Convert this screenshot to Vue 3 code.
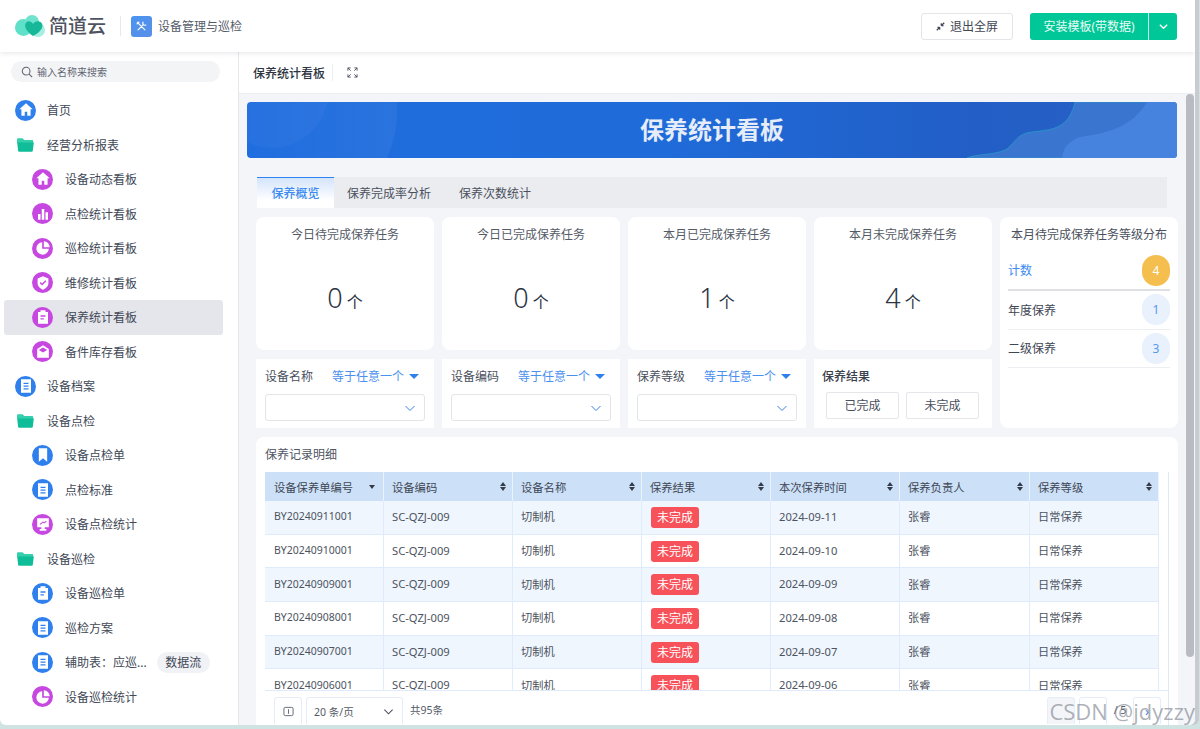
<script setup>
const paths = {
  home: 'M12 4 4 11h2.5v8h4v-5h3v5h4v-8H20z',
  bars: 'M6 12h3v7H6zM10.5 6h3v13h-3zM15 10h3v9h-3z',
  pie: 'M11 5a7.5 7.5 0 1 0 8 8h-8zM13 4v7h7a7 7 0 0 0-7-7z',
  shield: 'M12 4 5.5 6.5V12c0 4 3 6.5 6.5 8 3.5-1.5 6.5-4 6.5-8V6.5zM11 15l-3-3 1.2-1.2L11 12.6l3.8-3.8L16 10z',
  clip: 'M9 4h6v2h3v14H6V6h3zM9 10v1.6h6V10zM9 13.5v1.6h4v-1.6z',
  mail: 'M12 4 5 8.5V19h14V8.5zM7 9.5 12 6.5l5 3-5 3.2z',
  doc: 'M6 4h12v16H6zM9 8v1.5h6V8zM9 11.3v1.5h6v-1.5zM9 14.6v1.5h6v-1.5z',
  mark: 'M7 4h10v16l-5-4-5 4z',
  screen: 'M5 5h14v11h-5v2h2v2H8v-2h2v-2H5zM8 12l1 1 3-2.5 1.5 1L16.5 9l-1-1-2 2-1.5-1-4 3z',
}
const nav = [
  { t: '首页', k: 'home', c: 'b', lv: 1 },
  { t: '经营分析报表', k: 'folder', lv: 1 },
  { t: '设备动态看板', k: 'home', c: 'p', lv: 2 },
  { t: '点检统计看板', k: 'bars', c: 'p', lv: 2 },
  { t: '巡检统计看板', k: 'pie', c: 'p', lv: 2 },
  { t: '维修统计看板', k: 'shield', c: 'p', lv: 2 },
  { t: '保养统计看板', k: 'clip', c: 'p', lv: 2, on: true },
  { t: '备件库存看板', k: 'mail', c: 'p', lv: 2 },
  { t: '设备档案', k: 'doc', c: 'b', lv: 1 },
  { t: '设备点检', k: 'folder', lv: 1 },
  { t: '设备点检单', k: 'mark', c: 'b', lv: 2 },
  { t: '点检标准', k: 'doc', c: 'b', lv: 2 },
  { t: '设备点检统计', k: 'screen', c: 'p', lv: 2 },
  { t: '设备巡检', k: 'folder', lv: 1 },
  { t: '设备巡检单', k: 'clip', c: 'b', lv: 2 },
  { t: '巡检方案', k: 'doc', c: 'b', lv: 2 },
  { t: '辅助表：应巡...', k: 'doc', c: 'b', lv: 2, tag: '数据流' },
  { t: '设备巡检统计', k: 'pie', c: 'p', lv: 2 },
]
const stats = [
  { t: '今日待完成保养任务', v: 0 },
  { t: '今日已完成保养任务', v: 0 },
  { t: '本月已完成保养任务', v: 1 },
  { t: '本月未完成保养任务', v: 4 },
]
const filters = ['设备名称', '设备编码', '保养等级']
const cols = ['设备保养单编号', '设备编码', '设备名称', '保养结果', '本次保养时间', '保养负责人', '保养等级']
const rows = [
  ['BY20240911001', '2024-09-11'],
  ['BY20240910001', '2024-09-10'],
  ['BY20240909001', '2024-09-09'],
  ['BY20240908001', '2024-09-08'],
  ['BY20240907001', '2024-09-07'],
  ['BY20240906001', '2024-09-06'],
]
</script>

<template>
  <div class="win">
    <header class="top">
      <svg class="logo" viewBox="0 0 30 22" width="30" height="22">
        <circle cx="8.500" cy="12.500" r="8.500" fill="#5fe0c8" />
        <circle cx="17" cy="7" r="7" fill="#6fe3cd" />
        <ellipse cx="23" cy="15" rx="7" ry="7" fill="#a5efe0" />
        <path d="M18 21C12 17 9 12 10.500 8.500 12 5.500 16 5.500 18 9c2-3.500 7-3.500 9-.5 2 4.500-3 9.500-9 12.500z" fill="#17b79a" />
      </svg>
      <span class="brand">简道云</span>
      <i class="vline"></i>
      <span class="appicon">
        <svg viewBox="0 0 24 24" width="15" height="15" fill="none" stroke="#fff" stroke-width="1.800" stroke-linecap="round">
          <path d="M7 7l10.500 10.500M5.500 5.500 8 5M5.500 5.500 5 8M15 9 6.500 17.500M14 6.500a3.500 3.500 0 0 0 3.500 3.500 3.500 3.500 0 0 0 1.500-.4M14 6.500a3.500 3.500 0 0 1 .5-1.500" />
        </svg>
      </span>
      <span class="appname">设备管理与巡检</span>
      <span class="grow"></span>
      <button class="exit">
        <svg viewBox="0 0 12 12" width="9" height="9" fill="none" stroke="#3a4252" stroke-width="1.500"><path d="M1 11 5 7M5 7H1.800M5 7v3.200M11 1 7 5M7 5h3.200M7 5V1.800" /></svg>
        退出全屏
      </button>
      <div class="install">
        <span class="inst-main">安装模板(带数据)</span>
        <span class="inst-drop">
          <svg viewBox="0 0 12 12" width="11" height="11" fill="none" stroke="#fff" stroke-width="1.500"><path d="M2 4l4 4 4-4" /></svg>
        </span>
      </div>
    </header>

    <div class="body">
      <aside class="side">
        <div class="search">
          <svg viewBox="0 0 14 14" width="12" height="12" fill="none" stroke="#5d6470" stroke-width="1.200"><circle cx="6" cy="6" r="4.500" /><path d="M9.500 9.500 13 13" /></svg>
          <span>输入名称来搜索</span>
        </div>
        <nav class="nav">
          <div v-for="n in nav" :key="n.t" class="item" :class="['lv' + n.lv, { on: n.on }]">
            <svg v-if="n.k === 'folder'" class="folder" viewBox="0 0 17 14" width="17" height="14">
              <path d="M0 1.500C0 .7.500.2 1.200.2h4.300L7.300 2H15c.8 0 1.200.5 1.200 1.200V5H0z" fill="#36cfae" />
              <path d="M.2 4.500h16.600l-1 8.300c-.1.600-.5 1-1.100 1H2.200c-.6 0-1-.4-1.100-1z" fill="#0fbd98" />
            </svg>
            <span v-else class="dot" :class="n.c">
              <svg viewBox="0 0 24 24" width="20" height="20" fill="#fff" fill-rule="evenodd"><path :d="paths[n.k]" /></svg>
            </span>
            <span class="label">{{ n.t }}</span>
            <span v-if="n.tag" class="tag">{{ n.tag }}</span>
          </div>
        </nav>
      </aside>

      <main class="main">
        <div class="tabbar">
          <span class="tabname">保养统计看板</span>
          <i class="vline2"></i>
          <svg viewBox="0 0 12 12" width="11" height="11" fill="none" stroke="#4a5160" stroke-width="1"><path d="M1 4V1h3M8 1h3v3M11 8v3H8M4 11H1V8M1 1l3 3M11 1 8 4M11 11 8 8M1 11l3-3" /></svg>
        </div>
        <div class="content">
          <section class="banner">
            <i class="c1"></i><i class="c2"></i>
            <svg class="waves" viewBox="0 0 210 56" width="210" height="56" preserveAspectRatio="none">
              <path d="M0 56C8 52 28 53 38 48 46 44 48 34 60 31 70 28 92 31 102 15 105 10 107 5 108 0H210V56Z" fill="#3a75cf" stroke="#2a9bc9" stroke-width=".8" />
              <path d="M95 56C96 44 105 36 118 34 140 31 165 25 180 0H210V56Z" fill="#4583de" />
            </svg>
            <h1>保养统计看板</h1>
          </section>

          <div class="tabs">
            <span class="tab active">保养概览</span>
            <span class="tab">保养完成率分析</span>
            <span class="tab">保养次数统计</span>
          </div>

          <div class="grid">
            <div v-for="s in stats" :key="s.t" class="stat">
              <div class="stat-t">{{ s.t }}</div>
              <div class="stat-v">{{ s.v }}<small>个</small></div>
            </div>
            <div class="dist">
              <div class="dist-t">本月待完成保养任务等级分布</div>
              <div class="dist-row head"><span>计数</span><b class="pill gold">4</b></div>
              <div class="dist-row"><span>年度保养</span><b class="pill">1</b></div>
              <div class="dist-row"><span>二级保养</span><b class="pill">3</b></div>
            </div>
            <div v-for="f in filters" :key="f" class="filter">
              <div class="f-head">
                <span>{{ f }}</span>
                <span class="f-op">等于任意一个<i class="tri"></i></span>
              </div>
              <div class="select">
                <svg viewBox="0 0 12 12" width="12" height="12" fill="none" stroke="#3b82e6" stroke-width="1"><path d="M1.500 4 6 8.500 10.500 4" /></svg>
              </div>
            </div>
            <div class="filter result">
              <div class="r-title">保养结果</div>
              <div class="r-btns"><span>已完成</span><span>未完成</span></div>
            </div>
          </div>

          <section class="records">
            <div class="rec-t">保养记录明细</div>
            <div class="tbl-wrap">
              <div class="thead trow">
                <div v-for="(c, i) in cols" :key="c" class="cell">
                  <span>{{ c }}</span>
                  <i v-if="i === 0" class="sort-one"></i>
                  <i v-else class="sort"></i>
                </div>
              </div>
              <div v-for="(r, i) in rows" :key="r[0]" class="trow row" :class="{ odd: i % 2 === 0 }">
                <div class="cell code">{{ r[0] }}</div>
                <div class="cell">SC-QZJ-009</div>
                <div class="cell">切制机</div>
                <div class="cell res"><span class="bad">未完成</span></div>
                <div class="cell">{{ r[1] }}</div>
                <div class="cell">张睿</div>
                <div class="cell">日常保养</div>
              </div>
              <div class="pager">
                <span class="pg-btn">
                  <svg viewBox="0 0 12 12" width="11" height="11" fill="none" stroke="#5d6470" stroke-width="1"><rect x="1" y="1.500" width="10" height="9" rx="1.500" /><path d="M6 3.500v5" /></svg>
                </span>
                <span class="pg-size">20 条/页
                  <svg viewBox="0 0 12 12" width="11" height="11" fill="none" stroke="#444b58" stroke-width="1.100"><path d="M1.500 4 6 8.500 10.500 4" /></svg>
                </span>
                <span class="pg-total">共95条</span>
                <span class="grow"></span>
                <span class="pg-btn cur"></span>
                <span class="pg-btn"></span>
                <span class="pg-of">/ 5</span>
                <span class="pg-btn next">›</span>
              </div>
            </div>
          </section>
        </div>
        <i class="scroll"></i>
        <span class="mark">CSDN @jdyzzy</span>
      </main>
    </div>
  </div>
</template>

<style>
html, body { margin: 0; background: #cfe4e2; overflow: hidden; }
</style>

<style scoped>
* { box-sizing: border-box; }
i { font-style: normal; display: block; }
.win {
  width: 1195px; height: 725px; background: #fff; display: flex; flex-direction: column;
  border-bottom-right-radius: 6px; border-bottom-left-radius: 6px; overflow: hidden;
  box-shadow: 4px 0 0 #c9cbd0;
  font-family: "Noto Sans", "Noto Sans CJK SC", sans-serif; font-size: 12px; color: #3f4654;
}
.top {
  height: 52px; flex: none; display: flex; align-items: center; padding: 0 0 0 15px; position: relative; z-index: 2;
  background: #fff; box-shadow: 0 1px 5px rgba(30, 40, 60, .12);
}
.logo { flex: none; }
.brand { font-size: 19px; font-weight: 500; color: #4d5360; margin-left: 4px; line-height: 24px; }
.vline { width: 1px; height: 20px; background: #e6e8ec; margin: 0 10px 0 14px; }
.appicon { width: 21px; height: 21px; border-radius: 3px; background: linear-gradient(135deg, #4a94ef, #5a8fe8); display: flex; align-items: center; justify-content: center; }
.appname { margin-left: 6px; font-size: 12px; color: #555c69; }
.grow { flex: 1; }
.exit {
  width: 92px; height: 27px; border: 1px solid #e3e5e9; border-radius: 3px; background: #fff; color: #3f4654;
  font: inherit; display: flex; align-items: center; justify-content: center; gap: 5px; padding: 0;
}
.install { display: flex; height: 27px; margin: 0 18px 0 17px; color: #fff; background: #00c797; border-radius: 3px; }
.inst-main { width: 119px; display: flex; align-items: center; justify-content: center; border-right: 1px solid #c6f1e6; color: #e9fbf6; }
.inst-drop { width: 28px; display: flex; align-items: center; justify-content: center; }

.body { flex: 1; min-height: 0; display: flex; }
.side { width: 239px; flex: none; border-right: 1px solid #e5e7eb; padding: 9px 15px 0 4px; overflow: hidden; }
.search {
  height: 21px; margin: 0 3px 0 7px; border-radius: 11px; background: #f3f4f6; display: flex; align-items: center;
  gap: 4px; padding-left: 10px; font-size: 10px; color: #5e6572;
}
.nav { margin-top: 11px; }
.item { height: 34.5px; display: flex; align-items: center; border-radius: 3px; font-size: 12px; color: #414856; }
.item.on { background: #e5e6eb; }
.lv1 { padding-left: 11px; }
.lv2 { padding-left: 28px; }
.dot { width: 21px; height: 21px; border-radius: 50%; display: flex; align-items: center; justify-content: center; flex: none; }
.dot.b { background: #2f80ed; }
.dot.p { background: #c648e0; }
.folder { margin: 0 4px 0 2px; flex: none; }
.lv1 .label { margin-left: 11px; }
.lv1 .folder + .label { margin-left: 9px; }
.lv2 .label { margin-left: 12px; }
.tag { margin-left: 10px; width: 53px; height: 21px; border-radius: 11px; background: #f1f2f5; text-align: center; line-height: 21px; font-size: 12px; }

.main { flex: 1; min-width: 0; display: flex; flex-direction: column; position: relative; }
.tabbar { height: 42px; flex: none; display: flex; align-items: center; padding-left: 14px; background: #fff; border-bottom: 1px solid #eceef1; }
.tabname { font-size: 12px; font-weight: 500; color: #2d3340; }
.vline2 { width: 1px; height: 17px; background: #eceef1; margin: 0 14px 0 7px; }
.content { flex: 1; min-height: 0; overflow: hidden; background: #f3f5f9; padding: 8px 0 0 8px; }
.banner {
  position: relative; overflow: hidden; width: 930px; height: 56px; border-radius: 4px;
  background: linear-gradient(90deg, #1f6ddf, #1f6bd9 45%, #225ec6 78%, #2a62c5);
  display: flex; align-items: center; justify-content: center;
}
.banner h1 { margin: 0; position: relative; font-size: 24px; line-height: 56px; font-weight: 700; color: #e6edf8; }
.c1, .c2 { position: absolute; border-radius: 50%; }
.c1 { width: 112px; height: 112px; left: -31px; top: -66px; background: rgba(255, 255, 255, .03); }
.c2 { width: 220px; height: 220px; left: -70px; top: -100px; background: linear-gradient(90deg, transparent 30%, rgba(255, 255, 255, .05)); }
.waves { position: absolute; right: 0; top: 0; }
.tabs { margin: 19px 0 0 10px; width: 910px; height: 31px; background: #ebecf0; display: flex; font-size: 12px; }
.tab { height: 31px; line-height: 33px; margin-right: 28px; color: #4a505d; }
.tab.active {
  width: 77px; margin-right: 13px; text-align: center; font-weight: 500; color: #3b8bf0; border-top: 1px solid #2d84f2; line-height: 31px;
  background: linear-gradient(#d4e4fb, #fff 75%);
}
.grid { margin: 9px 0 0 9px; display: grid; grid-template-columns: repeat(5, 178px); grid-template-rows: 133px 69px; gap: 9px 8px; }
.stat { background: #fff; border-radius: 8px; text-align: center; }
.stat-t { margin-top: 9px; line-height: 17px; font-size: 12px; color: #555b68; }
.stat-v { margin-top: 37px; font-size: 27px; line-height: 36px; font-weight: 300; color: #2c3444; }
.stat-v small { margin-left: 4px; font-size: 16px; font-weight: 400; }
.dist { grid-column: 5; grid-row: 1 / 3; background: #fff; border-radius: 8px; padding: 9px 8px; }
.dist-t { line-height: 17px; font-size: 12px; color: #4a505d; white-space: nowrap; text-align: center; }
.dist-row { height: 38.5px; display: flex; align-items: center; justify-content: space-between; border-bottom: 1px solid #eceef1; }
.dist-row.head { height: 40px; margin-top: 8px; border-bottom: 2px solid #dfe0e4; color: #3b8bf0; }
.pill { width: 28px; height: 31px; border-radius: 14px; background: #e9f1fd; color: #5597f0; font-weight: 400; text-align: center; line-height: 31px; font-size: 12px; }
.pill.gold { background: #f5bf4f; color: #fff; }
.filter { background: #fff; padding: 9px 9px 0; }
.f-head { display: flex; justify-content: space-between; padding-right: 6px; line-height: 17px; color: #4a505d; }
.f-op { color: #4a90ee; display: flex; align-items: center; }
.tri { width: 0; height: 0; border: 5px solid transparent; border-top: 5.5px solid #2f80ed; border-bottom: 0; margin-left: 5px; }
.select { margin-top: 9px; height: 27px; border: 1px solid #e2e4e8; border-radius: 3px; display: flex; align-items: center; justify-content: flex-end; padding-right: 8px; width: 160px; }
.result { padding: 9px 8px 0; }
.r-title { line-height: 17px; font-weight: 500; color: #3a404d; }
.r-btns { display: flex; gap: 7px; margin-top: 7px; padding-left: 4px; }
.r-btns span { width: 73px; height: 27px; line-height: 26px; text-align: center; border: 1px solid #e4e6ea; border-radius: 2px; color: #4a505d; }
.records { margin: 9px 0 0 9px; width: 922px; height: 300px; background: #fff; border-radius: 8px 8px 0 0; padding: 9px 9px 0; }
.rec-t { line-height: 17px; color: #4f5562; }
.tbl-wrap { margin-top: 9px; width: 904px; border-right: 1px solid #dce9fa; }
.trow { display: grid; grid-template-columns: 119px 129px 129px 129px 129px 130px 129px; width: 894px; }
.thead { height: 29px; background: #cce1f8; color: #3f4654; font-size: 11.300px; }
.cell { padding: 0 8px; display: flex; align-items: center; border-right: 1px solid #e0ecfb; white-space: nowrap; min-width: 0; }
.cell:first-child { padding-left: 9px; }
.thead .cell { justify-content: space-between; border-right: 1px solid #eaf2fc; padding-right: 6px; }
.row { height: 33.700px; border-bottom: 1px solid #dfebfb; font-size: 11.200px; color: #4d5360; }
.row.odd { background: #eff6fe; }
.row .cell { padding-bottom: 2px; }
.row .cell.res { padding-bottom: 0; }
.row .cell.code { font-size: 10.500px; }
.bad { background: #f7525a; color: #fff; border-radius: 3px; width: 48px; height: 21px; line-height: 21px; text-align: center; font-size: 12px; margin-left: 1px; }
.sort, .sort-one { width: 0; height: 0; border: 3.500px solid transparent; }
.sort-one { border-top: 4px solid #353b48; border-bottom: 0; margin-right: 2px; }
.sort { position: relative; border-top: 0; border-bottom: 4px solid #353b48; top: -3px; }
.sort::after { content: ""; position: absolute; left: -3.500px; top: 5px; border: 3.500px solid transparent; border-bottom: 0; border-top: 4px solid #353b48; }
.pager {
  position: relative; z-index: 1; height: 40px; margin-top: -13px; background: #fff; border-top: 1px solid #dfebfb;
  display: flex; align-items: flex-start; padding: 6px 0 0 9px; font-size: 10.500px; color: #555b68;
}
.pg-btn { width: 28px; height: 27px; border: 1px solid #e4eefb; border-bottom: 0; border-radius: 3px 3px 0 0; display: flex; align-items: center; justify-content: center; }
.pg-size { margin-left: 4px; width: 97px; height: 27px; border: 1px solid #e4eefb; border-bottom: 0; border-radius: 3px 3px 0 0; display: flex; align-items: center; justify-content: space-between; padding: 0 8px 0 7px; }
.pg-total { margin-left: 7px; line-height: 27px; }
.cur { background: #f3f5f8; margin-right: 4px; }
.pg-of { width: 26px; line-height: 27px; text-align: center; }
.next { margin-right: 7px; color: #3b82e6; font-size: 13px; }
.scroll { position: absolute; right: 1px; top: 42px; width: 8px; height: 563px; border-radius: 4px; background: #b9bbc3; }
.mark { position: absolute; z-index: 3; right: 0; bottom: 1px; font-size: 22px; line-height: 26px; color: rgba(120, 125, 135, .6); font-family: "Open Sans", sans-serif; white-space: nowrap; }
</style>
